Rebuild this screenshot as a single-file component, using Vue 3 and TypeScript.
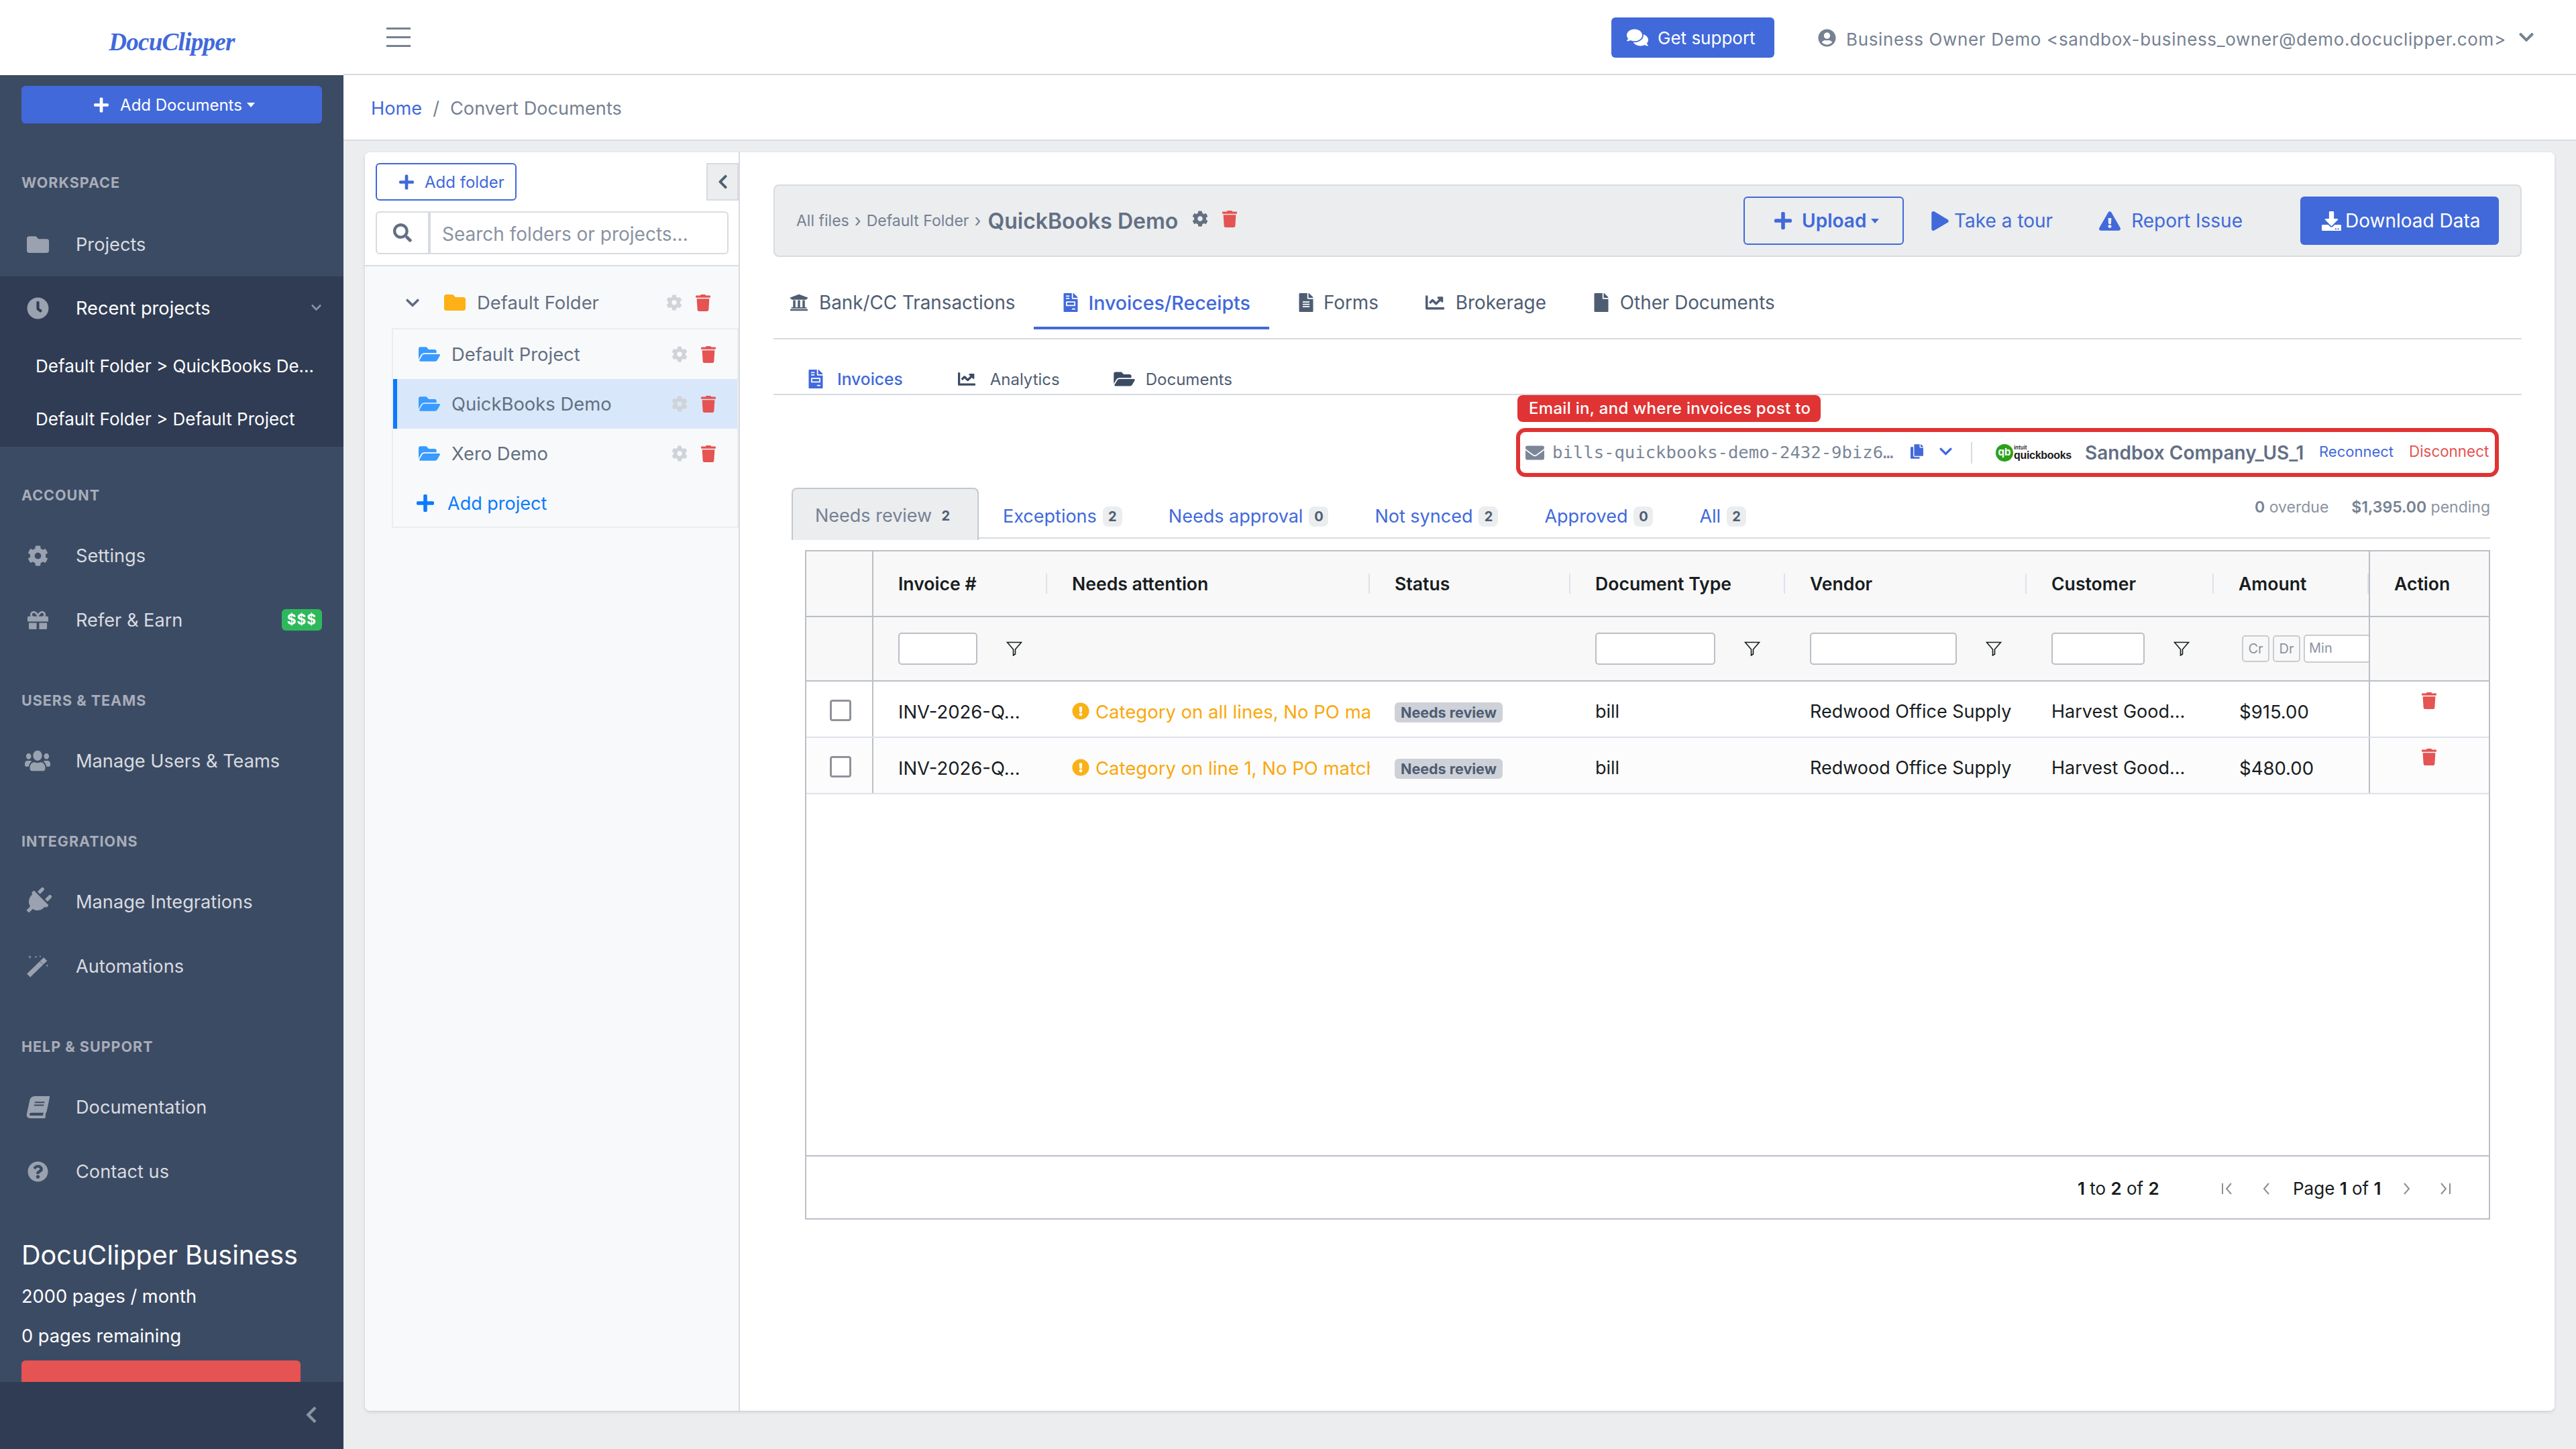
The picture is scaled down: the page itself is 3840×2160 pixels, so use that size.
<script setup lang="ts">
import { h } from 'vue'

const icons: Record<string, [number, string]> = {
  folder: [512, 'M464 128H272l-64-64H48C21.49 64 0 85.49 0 112v288c0 26.51 21.49 48 48 48h416c26.51 0 48-21.49 48-48V176c0-26.51-21.49-48-48-48z'],
  folderOpen: [576, 'M572.694 292.093L500.27 416.248A63.997 63.997 0 0 1 444.989 448H45.025c-18.523 0-30.064-20.093-20.731-36.093l72.424-124.155A64 64 0 0 1 152 256h399.964c18.523 0 30.064 20.093 20.73 36.093zM152 224h328v-48c0-26.51-21.49-48-48-48H272l-64-64H48C21.49 64 0 85.49 0 112v278.046l69.077-118.418C86.214 242.25 117.989 224 152 224z'],
  clock: [512, 'M256,8C119,8,8,119,8,256S119,504,256,504,504,393,504,256,393,8,256,8Zm92.49,313h0l-20,25a16,16,0,0,1-22.49,2.5h0l-67-49.72a40,40,0,0,1-15-31.23V112a16,16,0,0,1,16-16h32a16,16,0,0,1,16,16V256l58,42.5A16,16,0,0,1,348.49,321Z'],
  cog: [512, 'M487.4 315.7l-42.6-24.6c4.3-23.2 4.3-47 0-70.2l42.6-24.6c4.9-2.8 7.1-8.6 5.5-14-11.1-35.6-30-67.8-54.7-94.6-3.8-4.1-10-5.1-14.8-2.3L380.8 110c-17.9-15.4-38.5-27.3-60.8-35.1V25.8c0-5.6-3.9-10.5-9.4-11.7-36.7-8.2-74.3-7.8-109.2 0-5.5 1.2-9.4 6.1-9.4 11.7V75c-22.2 7.9-42.8 19.8-60.8 35.1L88.7 85.5c-4.9-2.8-11-1.9-14.8 2.3-24.7 26.7-43.6 58.9-54.7 94.6-1.7 5.4.6 11.2 5.5 14L67.3 221c-4.3 23.2-4.3 47 0 70.2l-42.6 24.6c-4.9 2.8-7.1 8.6-5.5 14 11.1 35.6 30 67.8 54.7 94.6 3.8 4.1 10 5.1 14.8 2.3l42.6-24.6c17.9 15.4 38.5 27.3 60.8 35.1v49.2c0 5.6 3.9 10.5 9.4 11.7 36.7 8.2 74.3 7.8 109.2 0 5.5-1.2 9.4-6.1 9.4-11.7v-49.2c22.2-7.9 42.8-19.8 60.8-35.1l42.6 24.6c4.9 2.8 11 1.9 14.8-2.3 24.7-26.7 43.6-58.9 54.7-94.6 1.5-5.5-.7-11.3-5.6-14.1zM256 336c-44.1 0-80-35.9-80-80s35.9-80 80-80 80 35.9 80 80-35.9 80-80 80z'],
  trash: [448, 'M432 32H312l-9.4-18.7A24 24 0 0 0 281.1 0H166.8a23.72 23.72 0 0 0-21.4 13.3L136 32H16A16 16 0 0 0 0 48v32a16 16 0 0 0 16 16h416a16 16 0 0 0 16-16V48a16 16 0 0 0-16-16zM53.2 467a48 48 0 0 0 47.9 45h245.8a48 48 0 0 0 47.9-45L416 128H32z'],
  plus: [448, 'M416 208H272V64c0-17.67-14.33-32-32-32h-32c-17.67 0-32 14.33-32 32v144H32c-17.67 0-32 14.33-32 32v32c0 17.67 14.33 32 32 32h144v144c0 17.67 14.33 32 32 32h32c17.67 0 32-14.33 32-32V304h144c17.67 0 32-14.33 32-32v-32c0-17.67-14.33-32-32-32z'],
  search: [512, 'M505 442.7L405.3 343c-4.5-4.5-10.6-7-17-7H372c27.6-35.3 44-79.7 44-128C416 93.1 322.9 0 208 0S0 93.1 0 208s93.1 208 208 208c48.3 0 92.7-16.4 128-44v16.3c0 6.4 2.5 12.5 7 17l99.7 99.7c9.4 9.4 24.6 9.4 33.9 0l28.3-28.3c9.4-9.4 9.4-24.6.1-34zM208 336c-70.7 0-128-57.2-128-128 0-70.7 57.2-128 128-128 70.7 0 128 57.2 128 128 0 70.7-57.2 128-128 128z'],
  chevDown: [448, 'M207.029 381.476L12.686 187.132c-9.373-9.373-9.373-24.569 0-33.941l22.667-22.667c9.357-9.357 24.522-9.375 33.901-.04L224 284.505l154.745-154.021c9.379-9.335 24.544-9.317 33.901.04l22.667 22.667c9.373 9.373 9.373 24.569 0 33.941L240.971 381.476c-9.373 9.372-24.569 9.372-33.942 0z'],
  chevLeft: [320, 'M34.52 239.03L228.87 44.69c9.37-9.37 24.57-9.37 33.94 0l22.67 22.67c9.36 9.36 9.37 24.52.04 33.9L131.49 256l154.02 154.75c9.34 9.38 9.32 24.54-.04 33.9l-22.67 22.67c-9.37 9.37-24.57 9.37-33.94 0L34.52 272.97c-9.37-9.37-9.37-24.57 0-33.94z'],
  invoice: [384, 'M288 256H96v64h192v-64zm89-151L279.1 7c-4.5-4.5-10.6-7-17-7H256v128h128v-6.1c0-6.3-2.5-12.4-7-16.9zm-153 31V0H24C10.7 0 0 10.7 0 24v464c0 13.3 10.7 24 24 24h336c13.3 0 24-10.7 24-24V160H248c-13.2 0-24-10.8-24-24zM64 72c0-4.42 3.58-8 8-8h80c4.42 0 8 3.58 8 8v16c0 4.42-3.58 8-8 8H72c-4.42 0-8-3.58-8-8V72zm0 64c0-4.42 3.58-8 8-8h80c4.42 0 8 3.58 8 8v16c0 4.42-3.58 8-8 8H72c-4.42 0-8-3.58-8-8v-16zm256 304c0 4.42-3.58 8-8 8h-80c-4.42 0-8-3.58-8-8v-16c0-4.42 3.58-8 8-8h80c4.42 0 8 3.58 8 8v16zm0-200v96c0 8.84-7.16 16-16 16H80c-8.84 0-16-7.16-16-16v-96c0-8.84 7.16-16 16-16h224c8.84 0 16 7.16 16 16z'],
  fileAlt: [384, 'M224 136V0H24C10.7 0 0 10.7 0 24v464c0 13.3 10.7 24 24 24h336c13.3 0 24-10.7 24-24V160H248c-13.2 0-24-10.8-24-24zm64 236c0 6.6-5.4 12-12 12H108c-6.6 0-12-5.4-12-12v-8c0-6.6 5.4-12 12-12h168c6.6 0 12 5.4 12 12v8zm0-64c0 6.6-5.4 12-12 12H108c-6.6 0-12-5.4-12-12v-8c0-6.6 5.4-12 12-12h168c6.6 0 12 5.4 12 12v8zm0-72v8c0 6.6-5.4 12-12 12H108c-6.6 0-12-5.4-12-12v-8c0-6.6 5.4-12 12-12h168c6.6 0 12 5.4 12 12zm96-114.1v6.1H256V0h6.1c6.4 0 12.5 2.5 17 7l97.9 98c4.5 4.5 7 10.6 7 16.9z'],
  file: [384, 'M224 136V0H24C10.7 0 0 10.7 0 24v464c0 13.3 10.7 24 24 24h336c13.3 0 24-10.7 24-24V160H248c-13.2 0-24-10.8-24-24zm160-14.1v6.1H256V0h6.1c6.4 0 12.5 2.5 17 7l97.9 98c4.5 4.5 7 10.6 7 16.9z'],
  chart: [512, 'M496 384H64V80c0-8.84-7.16-16-16-16H16C7.16 64 0 71.16 0 80v336c0 17.67 14.33 32 32 32h464c8.84 0 16-7.16 16-16v-32c0-8.84-7.16-16-16-16zM464 96H345.94c-21.38 0-32.09 25.85-16.97 40.97l32.4 32.4L288 242.75l-73.37-73.37c-12.5-12.5-32.76-12.5-45.25 0l-68.69 68.69c-6.25 6.25-6.25 16.38 0 22.63l22.62 22.62c6.25 6.25 16.38 6.25 22.63 0L192 237.25l73.37 73.37c12.5 12.5 32.76 12.5 45.25 0l96-96 32.4 32.4c15.12 15.12 40.97 4.41 40.97-16.97V112c.01-8.84-7.15-16-15.99-16z'],
  bank: [512, 'M496 128v16a8 8 0 0 1-8 8h-24v12c0 6.627-5.373 12-12 12H60c-6.627 0-12-5.373-12-12v-12H24a8 8 0 0 1-8-8v-16a8 8 0 0 1 4.941-7.392l232-88a7.996 7.996 0 0 1 6.118 0l232 88A8 8 0 0 1 496 128zm-24 304H40c-13.255 0-24 10.745-24 24v16a8 8 0 0 0 8 8h464a8 8 0 0 0 8-8v-16c0-13.255-10.745-24-24-24zM96 192v192H60c-6.627 0-12 5.373-12 12v20h416v-20c0-6.627-5.373-12-12-12h-36V192h-64v192h-64V192h-64v192h-64V192H96z'],
  play: [448, 'M424.4 214.7L72.4 6.6C43.8-10.3 0 6.1 0 47.9V464c0 37.5 40.7 60.1 72.4 41.3l352-208c31.4-18.5 31.5-64.1 0-82.6z'],
  warn: [576, 'M569.517 440.013C587.975 472.007 564.806 512 527.94 512H48.054c-36.937 0-59.999-40.055-41.577-71.987L246.423 23.985c18.467-32.009 64.72-31.951 83.154 0l239.94 416.028zM288 354c-25.405 0-46 20.595-46 46s20.595 46 46 46 46-20.595 46-46-20.595-46-46-46zm-43.673-165.346l7.418 136c.347 6.364 5.609 11.346 11.982 11.346h48.546c6.373 0 11.635-4.982 11.982-11.346l7.418-136c.375-6.874-5.098-12.654-11.982-12.654h-63.383c-6.884 0-12.356 5.78-11.981 12.654z'],
  download: [512, 'M216 0h80c13.3 0 24 10.7 24 24v168h87.7c17.8 0 26.7 21.5 14.1 34.1L269.7 378.3c-7.5 7.5-19.8 7.5-27.3 0L90.1 226.1c-12.6-12.6-3.7-34.1 14.1-34.1H192V24c0-13.3 10.7-24 24-24zm296 376v112c0 13.3-10.7 24-24 24H24c-13.3 0-24-10.7-24-24V376c0-13.3 10.7-24 24-24h146.7l49 49c20.1 20.1 52.5 20.1 72.6 0l49-49H488c13.3 0 24 10.7 24 24zm-124 88c0-11-9-20-20-20s-20 9-20 20 9 20 20 20 20-9 20-20zm64 0c0-11-9-20-20-20s-20 9-20 20 9 20 20 20 20-9 20-20z'],
  mail: [512, 'M502.3 190.8c3.9-3.1 9.7-.2 9.7 4.7V400c0 26.5-21.5 48-48 48H48c-26.5 0-48-21.5-48-48V195.6c0-5 5.7-7.8 9.7-4.7 22.4 17.4 52.1 39.5 154.1 113.6 21.1 15.4 56.7 47.8 92.2 47.6 35.7.3 72-32.8 92.3-47.6 102-74.1 131.6-96.3 154-113.7zM256 320c23.2.4 56.6-29.2 73.4-41.4 132.7-96.3 142.8-104.7 173.4-128.7 5.8-4.5 9.2-11.5 9.2-18.9v-19c0-26.5-21.5-48-48-48H48C21.5 64 0 85.5 0 112v19c0 7.4 3.4 14.3 9.2 18.9 30.6 23.9 40.7 32.4 173.4 128.7 16.8 12.2 50.2 41.8 73.4 41.4z'],
  copy: [448, 'M320 448v40c0 13.255-10.745 24-24 24H24c-13.255 0-24-10.745-24-24V120c0-13.255 10.745-24 24-24h72v296c0 30.879 25.121 56 56 56h168zm0-344V0H152c-13.255 0-24 10.745-24 24v368c0 13.255 10.745 24 24 24h272c13.255 0 24-10.745 24-24V128H344c-13.2 0-24-10.8-24-24zm120.971-31.029L375.029 7.029A24 24 0 0 0 358.059 0H352v96h96v-6.059a24 24 0 0 0-7.029-16.97z'],
  comments: [576, 'M416 192c0-88.4-93.1-160-208-160S0 103.6 0 192c0 34.3 14.1 65.9 38 92-13.4 30.2-35.5 54.2-35.8 54.5-2.2 2.3-2.8 5.7-1.5 8.7S4.8 352 8 352c36.6 0 66.9-12.3 88.7-25 32.2 15.7 70.3 25 111.3 25 114.9 0 208-71.6 208-160zm122 220c23.9-26 38-57.7 38-92 0-66.9-53.5-124.2-129.3-148.1.9 6.6 1.3 13.3 1.3 20.1 0 105.9-107.7 192-240 192-10.8 0-21.3-.8-31.7-1.9C207.8 439.6 281.8 480 368 480c41 0 79.1-9.2 111.3-25 21.8 12.7 52.1 25 88.7 25 3.2 0 6.1-1.9 7.3-4.8 1.3-2.9.7-6.3-1.5-8.7-.3-.3-22.4-24.2-35.8-54.5z'],
  user: [496, 'M248 8C111 8 0 119 0 256s111 248 248 248 248-111 248-248S385 8 248 8zm0 96c48.6 0 88 39.4 88 88s-39.4 88-88 88-88-39.4-88-88 39.4-88 88-88zm0 344c-58.7 0-111.3-26.6-146.5-68.2 18.8-35.4 55.6-59.8 98.5-59.8 2.4 0 4.8.4 7.1 1.1 13 4.2 26.6 6.9 40.9 6.9 14.3 0 28-2.7 40.9-6.9 2.3-.7 4.7-1.1 7.1-1.1 42.9 0 79.7 24.4 98.5 59.8C359.3 421.4 306.7 448 248 448z'],
  gift: [512, 'M32 448c0 17.7 14.3 32 32 32h160V320H32v128zm256 32h160c17.7 0 32-14.3 32-32V320H288v160zm192-320h-42.1c6.2-12.1 10.1-25.5 10.1-40 0-48.5-39.5-88-88-88-41.6 0-68.5 21.3-103 68.3-34.5-47-61.4-68.3-103-68.3-48.5 0-88 39.5-88 88 0 14.5 3.8 27.9 10.1 40H32c-17.7 0-32 14.3-32 32v80c0 8.8 7.2 16 16 16h480c8.8 0 16-7.2 16-16v-80c0-17.7-14.3-32-32-32zm-326.1 0c-22.1 0-40-17.9-40-40s17.9-40 40-40c19.9 0 34.6 3.3 86.1 80h-86.1zm206.1 0h-86.1c51.4-76.5 65.7-80 86.1-80 22.1 0 40 17.9 40 40s-17.9 40-40 40z'],
  users: [640, 'M96 224c35.3 0 64-28.7 64-64s-28.7-64-64-64-64 28.7-64 64 28.7 64 64 64zm448 0c35.3 0 64-28.7 64-64s-28.7-64-64-64-64 28.7-64 64 28.7 64 64 64zm32 32h-64c-17.6 0-33.5 7.1-45.1 18.6 40.3 22.1 68.9 62 75.1 109.4h66c17.7 0 32-14.3 32-32v-32c0-35.3-28.7-64-64-64zm-256 0c61.9 0 112-50.1 112-112S381.9 32 320 32 208 82.1 208 144s50.1 112 112 112zm76.8 32h-8.3c-20.8 10-43.9 16-68.5 16s-47.6-6-68.5-16h-8.3C179.6 288 128 339.6 128 403.2V432c0 26.5 21.5 48 48 48h288c26.5 0 48-21.5 48-48v-28.8c0-63.6-51.6-115.2-115.2-115.2zm-223.7-13.4C161.5 263.1 145.6 256 128 256H64c-35.3 0-64 28.7-64 64v32c0 17.7 14.3 32 32 32h65.9c6.3-47.4 34.9-87.3 75.2-109.4z'],
  plug: [384, 'M320,32a32,32,0,0,0-64,0v96h64Zm48,128H16A16,16,0,0,0,0,176v32a16,16,0,0,0,16,16H32v32A160.07,160.07,0,0,0,160,412.8V512h64V412.8A160.07,160.07,0,0,0,352,256V224h16a16,16,0,0,0,16-16V176A16,16,0,0,0,368,160ZM128,32a32,32,0,0,0-64,0v96h64Z'],
  wand: [512, 'M1 431L391 51L469 129L79 509ZM310 140L303 147L375 219L382 212ZM70 0L80 30L110 40L80 50L70 80L60 50L30 40L60 30ZM210 10L218 32L240 40L218 48L210 70L202 48L180 40L202 32ZM310 0L316 20L336 28L316 36L310 56L304 36L284 28L304 20ZM470 210L478 232L500 240L478 248L470 270L462 248L440 240L462 232Z'],
  book: [448, 'M448 360V24c0-13.3-10.7-24-24-24H96C43 0 0 43 0 96v320c0 53 43 96 96 96h328c13.3 0 24-10.7 24-24v-16c0-7.5-3.5-14.3-8.9-18.7-4.2-15.4-4.2-59.3 0-74.7 5.4-4.3 8.9-11.1 8.9-18.6zM128 134c0-3.3 2.7-6 6-6h212c3.3 0 6 2.7 6 6v20c0 3.3-2.7 6-6 6H134c-3.3 0-6-2.7-6-6v-20zm0 64c0-3.3 2.7-6 6-6h212c3.3 0 6 2.7 6 6v20c0 3.3-2.7 6-6 6H134c-3.3 0-6-2.7-6-6v-20zm253.4 250H96c-17.7 0-32-14.3-32-32 0-17.6 14.4-32 32-32h285.4c-1.9 17.1-1.9 46.9 0 64z'],
  question: [512, 'M504 256c0 136.997-111.043 248-248 248S8 392.997 8 256C8 119.083 119.043 8 256 8s248 111.083 248 248zM262.655 90c-54.497 0-89.255 22.957-116.549 63.758-3.536 5.286-2.353 12.415 2.715 16.258l34.699 26.31c5.205 3.947 12.621 3.008 16.665-2.122 17.864-22.658 30.113-35.797 57.303-35.797 20.429 0 45.698 13.148 45.698 32.958 0 14.976-12.363 22.667-32.534 33.976C247.128 238.528 216 254.941 216 296v4c0 6.627 5.373 12 12 12h56c6.627 0 12-5.373 12-12v-1.333c0-28.462 83.186-29.647 83.186-106.667 0-58.002-60.165-102-116.531-102zM256 338c-25.365 0-46 20.635-46 46 0 25.364 20.635 46 46 46s46-20.636 46-46c0-25.365-20.635-46-46-46z'],
  alert: [512, 'M504 256c0 136.997-111.043 248-248 248S8 392.997 8 256C8 119.083 119.043 8 256 8s248 111.083 248 248zm-248 50c-25.405 0-46 20.595-46 46s20.595 46 46 46 46-20.595 46-46-20.595-46-46-46zm-43.673-165.346l7.418 136c.347 6.364 5.609 11.346 11.982 11.346h48.546c6.373 0 11.635-4.982 11.982-11.346l7.418-136c.375-6.874-5.098-12.654-11.982-12.654h-63.383c-6.884 0-12.356 5.78-11.981 12.654z'],
}

const Ico = (props: { n: string }) =>
  h('svg', { viewBox: `0 0 ${icons[props.n][0]} 512`, fill: 'currentColor' }, [h('path', { d: icons[props.n][1] })])
Ico.props = ['n']

const sections = [
  { title: 'ACCOUNT', items: [{ icon: 'cog', label: 'Settings' }, { icon: 'gift', label: 'Refer & Earn', badge: '$$$' }] },
  { title: 'USERS & TEAMS', items: [{ icon: 'users', label: 'Manage Users & Teams' }] },
  { title: 'INTEGRATIONS', items: [{ icon: 'plug', label: 'Manage Integrations' }, { icon: 'wand', label: 'Automations' }] },
  { title: 'HELP & SUPPORT', items: [{ icon: 'book', label: 'Documentation' }, { icon: 'question', label: 'Contact us' }] },
]
const projects = [
  { name: 'Default Project', selected: false },
  { name: 'QuickBooks Demo', selected: true },
  { name: 'Xero Demo', selected: false },
]
const mainTabs = [
  { icon: 'bank', label: 'Bank/CC Transactions' },
  { icon: 'invoice', label: 'Invoices/Receipts', active: true },
  { icon: 'fileAlt', label: 'Forms' },
  { icon: 'chart', label: 'Brokerage' },
  { icon: 'file', label: 'Other Documents' },
]
const subTabs = [
  { icon: 'invoice', label: 'Invoices', active: true },
  { icon: 'chart', label: 'Analytics' },
  { icon: 'folderOpen', label: 'Documents' },
]
const statusTabs = [
  { label: 'Exceptions', n: 2 },
  { label: 'Needs approval', n: 0 },
  { label: 'Not synced', n: 2 },
  { label: 'Approved', n: 0 },
  { label: 'All', n: 2 },
]
const headers = ['Invoice #', 'Needs attention', 'Status', 'Document Type', 'Vendor', 'Customer', 'Amount']
const rows = [
  { attention: 'Category on all lines, No PO match', amount: '$915.00' },
  { attention: 'Category on line 1, No PO match', amount: '$480.00' },
]
</script>

<template>
  <div class="app">
    <aside class="sidebar">
      <div class="brand"><span class="logo">DocuClipper</span></div>
      <div class="side-scroll">
        <button class="add-docs"><Ico n="plus" class="add-plus" /><span>Add Documents</span><i class="caret"></i></button>
        <div class="nav-title first">WORKSPACE</div>
        <div class="nav-item"><span class="nav-ico"><Ico n="folder" class="i-side" /></span>Projects</div>
        <div class="nav-group">
          <div class="nav-item open"><span class="nav-ico"><Ico n="clock" class="i-side" /></span>Recent projects<Ico n="chevDown" class="group-chev" /></div>
          <div class="sub-item">Default Folder &gt; QuickBooks De...</div>
          <div class="sub-item">Default Folder &gt; Default Project</div>
        </div>
        <template v-for="s in sections" :key="s.title">
          <div class="nav-title">{{ s.title }}</div>
          <div v-for="it in s.items" :key="it.label" class="nav-item">
            <span class="nav-ico"><Ico :n="it.icon" class="i-side" :class="'ic-' + it.icon" /></span>{{ it.label }}
            <span v-if="it.badge" class="money">{{ it.badge }}</span>
          </div>
        </template>
        <div class="plan">
          <div class="plan-name">DocuClipper Business</div>
          <div class="plan-line l1">2000 pages / month</div>
          <div class="plan-line l2">0 pages remaining</div>
          <div class="plan-bar"></div>
        </div>
      </div>
      <div class="side-foot"><Ico n="chevLeft" class="foot-chev" /></div>
    </aside>

    <div class="main">
      <header class="topbar">
        <div class="burger"><span></span><span></span><span></span></div>
        <button class="support"><Ico n="comments" class="support-ico" />Get support</button>
        <Ico n="user" class="user-ico" />
        <span class="user-name">Business Owner Demo &lt;sandbox-business_owner@demo.docuclipper.com&gt;</span>
        <Ico n="chevDown" class="user-chev" />
      </header>
      <nav class="crumbs"><a>Home</a><span class="sep">/</span><span>Convert Documents</span></nav>

      <section class="card">
        <div class="tree">
          <div class="tree-head">
            <div class="head-row">
              <button class="add-folder"><Ico n="plus" class="af-plus" />Add folder</button>
              <button class="collapse"><Ico n="chevLeft" class="collapse-ico" /></button>
            </div>
            <div class="search">
              <span class="search-add"><Ico n="search" class="search-ico" /></span>
              <span class="search-input">Search folders or projects...</span>
            </div>
          </div>
          <div class="folder-row">
            <Ico n="chevDown" class="folder-chev" />
            <Ico n="folder" class="folder-ico" />
            <span class="row-name">Default Folder</span>
            <Ico n="cog" class="row-cog" />
            <Ico n="trash" class="row-trash" />
          </div>
          <div class="project-list">
            <div v-for="p in projects" :key="p.name" class="project" :class="{ selected: p.selected }">
              <Ico n="folderOpen" class="project-ico" />
              <span class="row-name">{{ p.name }}</span>
              <Ico n="cog" class="row-cog" />
              <Ico n="trash" class="row-trash" />
            </div>
            <div class="add-project"><Ico n="plus" class="ap-plus" />Add project</div>
          </div>
        </div>

        <div class="content">
          <div class="toolbar">
            <span class="path">All files</span><span class="path-sep">›</span>
            <span class="path">Default Folder</span><span class="path-sep">›</span>
            <span class="path-current">QuickBooks Demo</span>
            <Ico n="cog" class="tool-cog" />
            <Ico n="trash" class="tool-trash" />
            <button class="upload"><Ico n="plus" class="up-plus" />Upload<i class="caret"></i></button>
            <a class="tool-link tour"><Ico n="play" class="tl-play" />Take a tour</a>
            <a class="tool-link report"><Ico n="warn" class="tl-warn" />Report Issue</a>
            <button class="download"><Ico n="download" class="dl-ico" />Download Data</button>
          </div>

          <div class="main-tabs">
            <div v-for="t in mainTabs" :key="t.label" class="main-tab" :class="{ active: t.active }">
              <Ico :n="t.icon" class="mt-ico" :class="'mt-' + t.icon" />{{ t.label }}
            </div>
          </div>

          <div class="sub-tabs">
            <div v-for="t in subTabs" :key="t.label" class="sub-tab" :class="{ active: t.active }">
              <Ico :n="t.icon" class="st-ico" :class="'st-' + t.icon" />{{ t.label }}
            </div>
          </div>

          <div class="connect">
            <div class="connect-tag">Email in, and where invoices post to</div>
            <div class="connect-box">
              <Ico n="mail" class="mail-ico" />
              <span class="mail-addr">bills-quickbooks-demo-2432-9biz6…</span>
              <Ico n="copy" class="copy-ico" />
              <Ico n="chevDown" class="addr-chev" />
              <span class="vsep"></span>
              <span class="qb-logo">
                <span class="qb-mark">qb</span>
                <span class="qb-words"><span class="qb-intuit">intuit</span><span class="qb-name">quickbooks</span></span>
              </span>
              <span class="company">Sandbox Company_US_1</span>
              <a class="reconnect">Reconnect</a>
              <a class="disconnect">Disconnect</a>
            </div>
          </div>

          <div class="status-tabs">
            <div class="status-tab active">Needs review<span class="st-count plain">2</span></div>
            <div v-for="t in statusTabs" :key="t.label" class="status-tab">{{ t.label }}<span class="st-count">{{ t.n }}</span></div>
            <div class="stats"><b>0</b> overdue<span class="stat-gap"></span><b>$1,395.00</b> pending</div>
          </div>

          <div class="grid">
            <div class="g-row g-head">
              <div class="g-cell g-check"></div>
              <div v-for="hd in headers" :key="hd" class="g-cell g-hcell">{{ hd }}</div>
              <div class="g-cell g-action g-hcell">Action</div>
            </div>
            <div class="g-row g-filter">
              <div class="g-cell g-check"></div>
              <div class="g-cell"><span class="f-input w118"></span><svg class="funnel fo-a" viewBox="0 0 24 22"><path d="M1.5 1.5h21L13.5 12v7l-3 2V12z" /></svg></div>
              <div class="g-cell"></div>
              <div class="g-cell"></div>
              <div class="g-cell"><span class="f-input w179"></span><svg class="funnel fo-b" viewBox="0 0 24 22"><path d="M1.5 1.5h21L13.5 12v7l-3 2V12z" /></svg></div>
              <div class="g-cell"><span class="f-input w219"></span><svg class="funnel fo-b" viewBox="0 0 24 22"><path d="M1.5 1.5h21L13.5 12v7l-3 2V12z" /></svg></div>
              <div class="g-cell"><span class="f-input w139"></span><svg class="funnel fo-b" viewBox="0 0 24 22"><path d="M1.5 1.5h21L13.5 12v7l-3 2V12z" /></svg></div>
              <div class="g-cell amount-filter"><span class="mini">Cr</span><span class="mini">Dr</span><span class="mini min">Min</span></div>
              <div class="g-cell g-action"></div>
            </div>
            <div v-for="(r, i) in rows" :key="i" class="g-row g-data" :class="{ odd: i === 1 }">
              <div class="g-cell g-check"><span class="checkbox"></span></div>
              <div class="g-cell wide">INV-2026-Q...</div>
              <div class="g-cell clip"><Ico n="alert" class="alert-ico" /><span class="attention">{{ r.attention }}</span></div>
              <div class="g-cell"><span class="review">Needs review</span></div>
              <div class="g-cell">bill</div>
              <div class="g-cell">Redwood Office Supply</div>
              <div class="g-cell">Harvest Good...</div>
              <div class="g-cell wide amt">{{ r.amount }}</div>
              <div class="g-cell g-action"><Ico n="trash" class="act-trash" /></div>
            </div>
            <div class="g-fill"></div>
            <div class="g-foot">
              <span class="count"><b>1</b> to <b>2</b> of <b>2</b></span>
              <svg class="pg first-pg" viewBox="0 0 18 24"><path d="M2 4v16M15 4L8 12l7 8" /></svg>
              <svg class="pg prev-pg" viewBox="0 0 12 24"><path d="M10 4L3 12l7 8" /></svg>
              <span class="page-of">Page <b>1</b> of <b>1</b></span>
              <svg class="pg next-pg" viewBox="0 0 12 24"><path d="M2 4l7 8-7 8" /></svg>
              <svg class="pg last-pg" viewBox="0 0 18 24"><path d="M3 4l7 8-7 8M16 4v16" /></svg>
            </div>
          </div>
        </div>
      </section>
    </div>
  </div>
</template>

<style>
html, body { margin: 0; background: #ebedef; }
</style>

<style scoped>
* { box-sizing: border-box; }
svg { display: block; flex: none; }
button { font: inherit; border: 0; padding: 0; }
.app { display: flex; width: 3840px; height: 2160px; overflow: hidden; font-family: Inter, "Noto Sans", sans-serif; font-size: 26px; color: #4f5d73; background: #ebedef; }

/* sidebar */
.sidebar { width: 512px; height: 2160px; flex: none; display: flex; flex-direction: column; background: #3c4b64; }
.brand { height: 112px; background: #fff; display: flex; align-items: center; justify-content: center; flex: none; }
.logo { font-family: "Liberation Serif", serif; font-style: italic; font-weight: 700; font-size: 37px; letter-spacing: -.7px; color: #4169da; margin-top: 12px; }
.side-scroll { flex: 1; overflow: hidden; min-height: 0; }
.add-docs { display: flex; align-items: center; justify-content: center; margin: 16px 32px 0; width: 448px; height: 56px; padding-left: 8px; background: #4169da; color: #fff; border-radius: 6px; font-size: 24px; }
.add-plus { width: 22px; height: 25px; margin-right: 17px; }
.caret { display: inline-block; border-top: 7px solid currentColor; border-left: 6px solid transparent; border-right: 6px solid transparent; margin-left: 7px; }
.nav-title { height: 48px; line-height: 48px; margin: 48px 0 18px; padding-left: 32px; font-size: 21.5px; font-weight: 700; letter-spacing: 1px; color: #a7adb9; }
.nav-title.first { margin: 64px 0 20px; }
.nav-item { display: flex; align-items: center; height: 96px; padding-left: 28px; color: #d8dbe0; position: relative; font-size: 27.2px; }
.nav-item.open { color: #fff; }
.nav-ico { width: 56px; margin-right: 29px; display: flex; justify-content: center; color: #9aa2af; }
.i-side { width: 33px; height: 33px; }
.ic-cog, .ic-gift, .ic-question { width: 31px; height: 31px; }
.ic-users { width: 38px; height: 38px; transform: scaleY(1.15); }
.ic-plug { height: 42px; width: 32px; transform: rotate(45deg); }
.ic-book { transform: skewX(-12deg); }
.nav-group { background: #303c54; height: 254px; }
.group-chev { position: absolute; right: 33px; top: 38px; width: 15px; height: 17px; color: #8a93a2; }
.sub-item { height: 79px; line-height: 79px; padding-left: 53px; color: #fff; }
.nav-group .nav-item { height: 94px; }
.money { position: absolute; right: 32px; top: 32px; width: 60px; height: 32px; border-radius: 6px; background: #2eb85c; color: #fff; font-size: 21px; font-weight: 700; text-align: center; line-height: 31px; letter-spacing: 1px; }
.plan { padding: 53px 32px 0; color: #fff; }
.plan-name { font-size: 39.6px; line-height: 48px; font-weight: 400; white-space: nowrap; }
.plan-line { line-height: 40px; font-size: 27.2px; }
.l1 { margin-top: 18px; }
.l2 { margin-top: 19px; }
.plan-bar { margin-top: 16px; width: 416px; height: 56px; background: #e55353; border-radius: 6px; }
.side-foot { height: 100px; flex: none; background: #303c54; display: flex; align-items: center; justify-content: flex-end; padding-right: 38px; }
.foot-chev { width: 20px; height: 28px; color: #8a93a2; margin-top: -2px; }

/* main */
.main { flex: 1; min-width: 0; display: flex; flex-direction: column; }
.topbar { height: 112px; flex: none; background: #fff; border-bottom: 2px solid #d8dbe0; display: flex; align-items: center; padding-left: 64px; color: #768192; }
.burger { width: 36px; display: flex; flex-direction: column; gap: 10px; }
.burger span { display: block; height: 3px; background: #768192; }
.support { display: flex; align-items: center; margin-left: 1790px; width: 243px; height: 60px; background: #4169da; color: #fff; border-radius: 6px; padding-left: 23px; margin-top: 2px; }
.support-ico { width: 32px; height: 32px; margin-right: 14px; }
.user-ico { width: 27px; height: 27px; margin-left: 65px; margin-top: 2px; }
.user-name { margin-left: 15px; white-space: nowrap; letter-spacing: .65px; margin-top: 6px; }
.user-chev { width: 22px; height: 25px; margin-left: 19px; color: #768192; }
.crumbs { height: 98px; flex: none; background: #fff; border-bottom: 2px solid #d8dbe0; display: flex; align-items: center; padding: 2px 0 0 41px; color: #768192; font-size: 27.2px; }
.crumbs a { color: #4169da; }
.sep { margin: 0 16px; }
.card { flex: none; margin: 17px 32px 0; height: 1876px; background: #fff; border-radius: 8px; box-shadow: 0 2px 4px rgba(60, 75, 100, .18); display: flex; overflow: hidden; }

/* tree */
.tree { width: 559px; flex: none; border-right: 2px solid #d8dbe0; background: #f8f9fa; }
.tree-head { background: #fff; border-bottom: 2px solid #d8dbe0; padding: 16px 0 16px 16px; height: 170px; }
.head-row { display: flex; justify-content: space-between; align-items: center; }
.add-folder { display: flex; align-items: center; width: 210px; height: 56px; border: 2px solid #4169da; border-radius: 6px; color: #4169da; background: #fff; padding-left: 33px; font-size: 24px; }
.af-plus { width: 22px; height: 25px; margin-right: 16px; }
.collapse { width: 48px; height: 56px; background: #ebedef; border: 2px solid #d8dbe0; display: flex; align-items: center; justify-content: center; color: #4f5d73; }
.collapse-ico { width: 15px; height: 26px; }
.search { display: flex; margin-top: 16px; height: 64px; }
.search-add { width: 80px; border: 2px solid #d8dbe0; border-radius: 6px 0 0 6px; display: flex; align-items: center; justify-content: center; color: #636f83; }
.search-ico { width: 28px; height: 28px; }
.search-input { width: 446px; border: 2px solid #d8dbe0; border-radius: 0 6px 6px 0; padding-left: 17px; line-height: 65px; color: #8a93a2; font-size: 28px; }
.folder-row { display: flex; align-items: center; height: 44px; margin: 32px 0 16px; padding: 0 42px 0 61px; color: #5c6b80; }
.folder-chev { width: 20px; height: 23px; margin-right: 37px; color: #5c6b80; }
.folder-ico { width: 32px; height: 32px; margin-right: 17px; color: #fdb017; }
.row-name { flex: 1; font-size: 27.4px; color: #636f83; white-space: nowrap; }
.row-cog { width: 24px; height: 24px; margin-right: 20px; color: #d0d3d9; }
.row-trash { width: 22px; height: 25px; color: #e55353; }
.project-list { margin-left: 40px; width: 517px; height: 298px; border: 2px solid #ebedef; }
.project { display: flex; align-items: center; height: 74px; padding: 0 32px 0 38px; }
.project.selected { background: #d8e7f9; border-left: 6px solid #0a7bff; padding-left: 32px; }
.project-ico { width: 32px; height: 32px; margin-right: 17px; color: #399bff; }
.add-project { display: flex; align-items: center; height: 74px; padding-left: 35px; color: #0a7bff; font-size: 27px; }
.ap-plus { width: 26px; height: 30px; margin-right: 20px; }

/* content */
.content { flex: 1; min-width: 0; padding: 48px 49px 0 50px; background: #fff; }
.toolbar { display: flex; align-items: center; height: 108px; background: #ebedef; border: 2px solid #d8dbe0; border-radius: 8px; padding: 0 32px; }
.path { font-size: 23px; color: #768192; }
.path-sep { font-size: 26px; color: #768192; margin: 0 8px; line-height: 1; }
.path-current { font-size: 32px; font-weight: 600; color: #636f83; margin-left: 2px; }
.tool-cog { width: 24px; height: 26px; margin-left: 21px; color: #636f83; margin-top: -6px; }
.tool-trash { width: 22px; height: 25px; margin-left: 21px; color: #e55353; margin-top: -6px; }
.upload { display: flex; align-items: center; margin-left: auto; width: 239px; height: 72px; background: transparent; border: 2px solid #4169da; border-radius: 6px; color: #4169da; font-size: 28px; font-weight: 600; padding-left: 44px; }
.up-plus { width: 26px; height: 30px; margin-right: 15px; }
.tool-link { display: flex; align-items: center; color: #4169da; font-size: 28px; }
.tour { margin-left: 41px; }
.report { margin-left: 69px; }
.tl-play { width: 26px; height: 29px; margin-right: 8px; }
.tl-warn { width: 32px; height: 29px; margin-right: 16px; }
.download { display: flex; align-items: center; margin-left: 86px; width: 296px; height: 72px; background: #4169da; border-radius: 6px; color: #fff; padding-left: 32px; font-size: 28px; }
.dl-ico { width: 29px; height: 29px; margin-right: 6px; }

.main-tabs { display: flex; margin-top: 28px; height: 95px; border-bottom: 2px solid #d8dbe0; padding-left: 24px; color: #4f5d73; font-size: 27.8px; }
.main-tab { display: flex; align-items: center; height: 80px; margin-right: 70px; }
.main-tab.active { color: #4169da; font-weight: 500; font-size: 28.5px; border-bottom: 4px solid #4169da; padding: 4px 28px 0 44px; margin: 0 44px 0 -43px; }
.mt-ico { width: 24px; height: 28px; margin-right: 16px; }
.mt-invoice { width: 22px; }
.mt-fileAlt { width: 22px; margin-right: 15px; }
.mt-bank { width: 28px; }
.mt-chart { width: 28px; margin-right: 17px; }
.sub-tabs { display: flex; align-items: center; margin-top: 35px; height: 48px; border-bottom: 2px solid #d8dbe0; padding: 2px 0 0 52px; font-size: 24px; color: #4f5d73; }
.sub-tab { display: flex; align-items: center; margin-right: 80px; }
.sub-tab.active { color: #4169da; font-weight: 500; font-size: 24.6px; }
.st-ico { height: 28px; margin-right: 21px; width: 22px; }
.st-chart { width: 30px; height: 26px; margin-right: 20px; color: #3c4b64; }
.st-folderOpen { width: 32px; height: 28px; margin-right: 16px; color: #3c4b64; }

.connect { display: flex; flex-direction: column; align-items: flex-start; margin-left: 1107px; width: 1465px; }
.connect-tag { height: 40px; line-height: 39px; margin-left: 2px; width: 452px; padding-left: 17px; background: #e03333; color: #fff; border-radius: 8px; font-size: 24px; font-weight: 500; letter-spacing: .3px; white-space: nowrap; }
.connect-box { display: flex; align-items: center; width: 1465px; height: 73px; margin-top: 9px; border: 6px solid #e03333; border-radius: 14px; padding: 0 8px; background: #fff; }
.mail-ico { width: 28px; height: 28px; color: #7b8698; }
.mail-addr { font-family: "DejaVu Sans Mono", monospace; font-size: 25.6px; color: #7b8698; margin-left: 12px; width: 534px; white-space: nowrap; margin-top: -2px; }
.copy-ico { width: 19px; height: 24px; color: #4169da; margin-top: -4px; }
.addr-chev { width: 19px; height: 22px; margin-left: 24px; color: #4169da; margin-top: -4px; }
.vsep { width: 2px; height: 32px; background: #d8dbe0; margin-left: 28px; }
.qb-logo { display: flex; align-items: center; margin-left: 35px; width: 133px; color: #1a1a1a; }
.qb-mark { width: 26px; height: 26px; border-radius: 50%; background: #2ca01c; color: #fff; font-size: 15px; font-weight: 700; line-height: 23px; text-align: center; flex: none; }
.qb-words { display: flex; flex-direction: column; margin-left: 1px; }
.qb-intuit { font-size: 8px; line-height: 8px; font-weight: 600; }
.qb-name { font-family: "Liberation Sans", sans-serif; font-size: 16px; line-height: 15px; font-weight: 700; letter-spacing: -.3px; }
.company { font-size: 28px; font-weight: 600; color: #636f83; width: 349px; white-space: nowrap; }
.reconnect { font-size: 22px; color: #4169da; margin-top: -4px; width: 134px; }
.disconnect { font-size: 22.4px; color: #e55353; margin-top: -4px; }

.status-tabs { display: flex; height: 76px; margin: 16px 47px 0 27px; border-bottom: 2px solid #d8dbe0; position: relative; color: #4169da; font-size: 27px; }
.status-tab { display: flex; align-items: center; height: 70px; padding: 14px 34.5px 0; white-space: nowrap; }
.status-tab.active { height: 78px; width: 279px; margin: 0 1.5px -4px 0; padding: 14px 0 12px 33px; color: #768192; background: #ebedef; border: 2px solid #c4c9d0; border-bottom: 0; border-radius: 8px 8px 0 0; }
.st-count { display: inline-block; margin-left: 9px; min-width: 29px; height: 30px; border-radius: 8px; background: #ebedef; color: #4f5d73; font-size: 20px; font-weight: 700; line-height: 30px; text-align: center; margin-top: 2px; }
.st-count.plain { margin-left: 6px; }
.stats { position: absolute; right: 0; top: 15px; font-size: 23px; color: #8a93a2; white-space: nowrap; }
.stats b { font-weight: 600; color: #768192; }
.stat-gap { display: inline-block; width: 34px; }

.grid { margin: 17px 47px 0 47px; height: 998px; border: 2px solid #babfc7; display: flex; flex-direction: column; color: #181d1f; font-size: 27px; }
.g-row { display: grid; grid-template-columns: 100px 259px 481px 299px 320px 360px 279px 231px 1fr; flex: none; }
.g-head { height: 98px; background: #f8f8f8; border-bottom: 2px solid #babfc7; font-weight: 600; font-size: 26.6px; }
.g-filter { height: 96px; background: #f8f8f8; border-bottom: 2px solid #babfc7; }
.g-data { height: 84px; background: #fff; border-bottom: 2px solid #dde2eb; }
.g-data.odd { background: #fcfcfc; }
.g-cell { display: flex; align-items: center; padding-left: 37px; white-space: nowrap; position: relative; min-width: 0; }
.g-cell.wide { font-size: 27.5px; }
.g-cell.amt { padding-left: 38px; }
.g-check { padding: 0; border-right: 2px solid #babfc7; justify-content: center; }
.g-action { border-left: 2px solid #babfc7; padding-left: 36px; }
.g-hcell::after { content: ""; position: absolute; right: 0; top: 33px; height: 30px; width: 2px; background: #dde2eb; }
.g-hcell.g-action::after { display: none; }
.g-data .g-cell { padding-top: 7px; }
.g-data .g-check { padding: 0; }
.g-data .g-action { padding: 0 0 0 77px; align-items: flex-start; }
.clip { overflow: hidden; }
.f-input { display: block; height: 48px; background: #fff; border: 2px solid #babfc7; border-radius: 5px; flex: none; }
.w118 { width: 118px; }
.w179 { width: 179px; }
.w219 { width: 219px; }
.w139 { width: 139px; }
.funnel { width: 24px; height: 22px; fill: none; stroke: #181d1f; stroke-width: 1.6; }
.fo-a { margin-left: 43px; }
.fo-b { margin-left: 43px; }
.amount-filter { padding-left: 42px; gap: 5px; overflow: hidden; font-size: 20px; color: #8a93a2; }
.mini { display: block; height: 40px; line-height: 36px; width: 41px; text-align: center; background: #f8f8f8; border: 2px solid #c9ccd1; border-radius: 5px; flex: none; }
.mini.min { width: 100px; height: 42px; background: #fff; text-align: left; padding-left: 6px; margin-right: -6px; }
.checkbox { display: block; width: 32px; height: 32px; border: 3px solid #8f9399; border-radius: 4px; background: #fff; margin: 3px 0 0 4px; }
.alert-ico { width: 26px; height: 26px; color: #f9b115; margin-right: 9px; margin-top: -2px; }
.attention { color: #f9a80d; font-size: 27.5px; }
.review { display: block; width: 161px; height: 30px; border-radius: 6px; background: #ced2d8; color: #4f5d73; font-size: 21.5px; font-weight: 700; line-height: 30px; text-align: center; margin-top: 2px; }
.act-trash { width: 22px; height: 25px; color: #e55353; margin-top: 16px; }
.g-fill { flex: 1; }
.g-foot { height: 94px; flex: none; border-top: 2px solid #babfc7; display: flex; align-items: center; padding: 3px 0 0 1895px; font-size: 26px; }
.g-foot b { font-weight: 600; }
.count { width: 214px; white-space: nowrap; }
.pg { height: 24px; fill: none; stroke: #8a8f94; stroke-width: 2; }
.first-pg, .last-pg { width: 18px; }
.prev-pg, .next-pg { width: 12px; }
.prev-pg { margin-left: 43px; }
.page-of { margin: 0 33px 0 34px; white-space: nowrap; }
.last-pg { margin-left: 42px; }
</style>
